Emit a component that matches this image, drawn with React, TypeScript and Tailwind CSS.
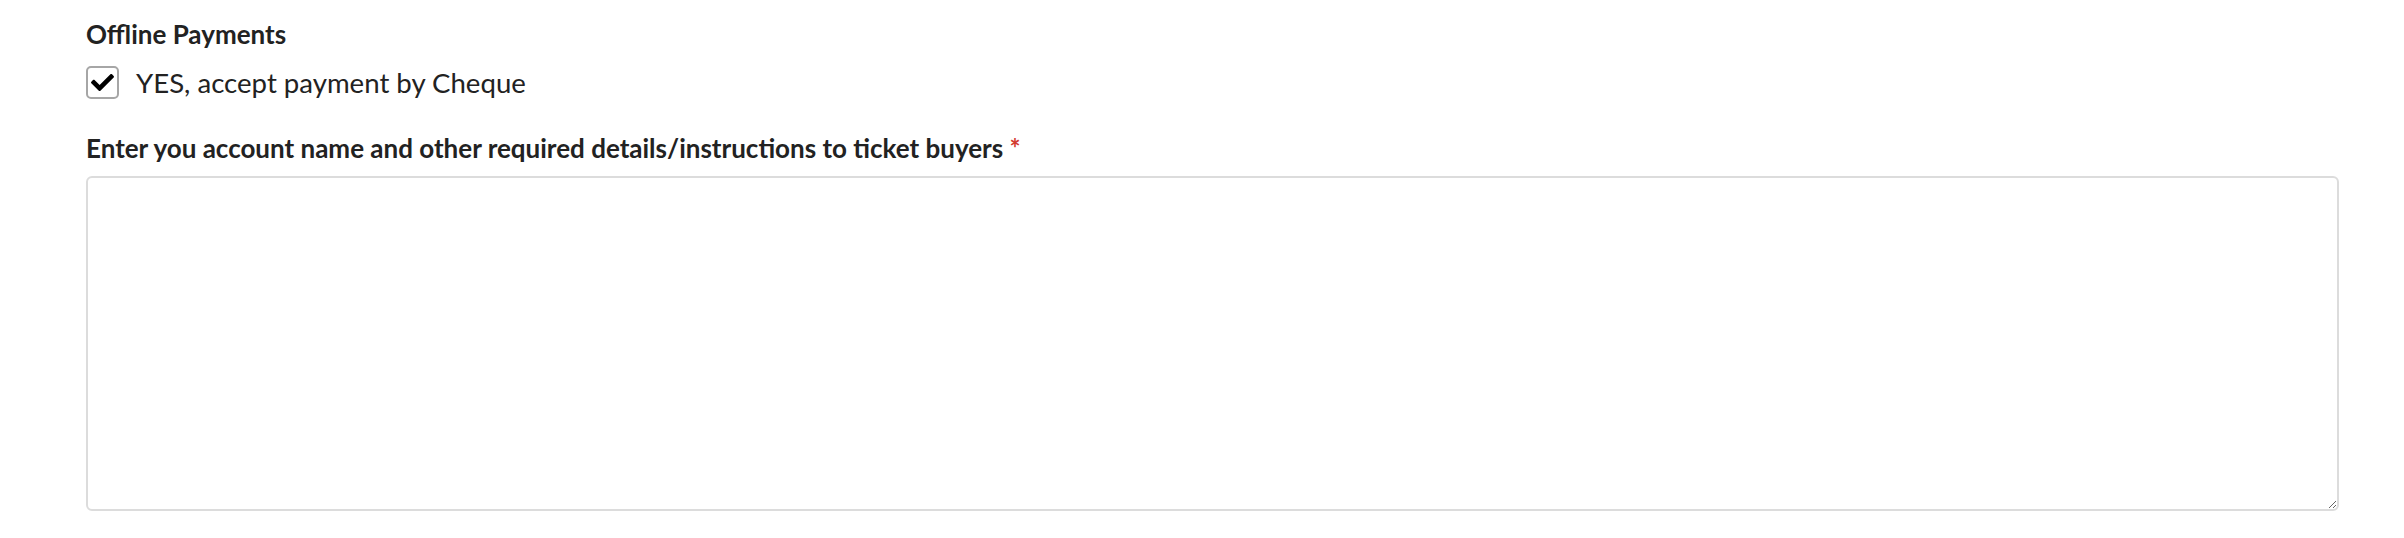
import { FaCheck } from "react-icons/fa";

export default function App() {
  return (
    <div className="min-h-screen bg-white font-['Lato','Liberation_Sans',sans-serif] text-[#222222]">
      <div className="w-[2253px] pl-[86px] pt-[17px] box-content">
        <h3 className="text-[26px] font-bold leading-[34px]">Offline Payments</h3>

        <label className="mt-[15px] flex items-center gap-[17px]">
          <span className="flex h-[33px] w-[33px] items-center justify-center rounded-[5px] border-2 border-[#a6a6a6] bg-white">
            <FaCheck className="h-[23px] w-[23px] text-black" />
          </span>
          <span className="text-[27.6px] leading-[32px]">YES, accept payment by Cheque</span>
        </label>

        <p className="mt-[32px] text-[26px] font-bold leading-[34px]">
          Enter you account name and other required details/instructions to ticket buyers{" "}
          <span className="font-bold text-[#d33a2f]">*</span>
        </p>

        <textarea className="mt-[11px] block h-[335px] w-full resize-y rounded-[6px] border-2 border-[#dcdcdc] bg-white p-3 text-[24px] outline-none" />
      </div>
    </div>
  );
}
